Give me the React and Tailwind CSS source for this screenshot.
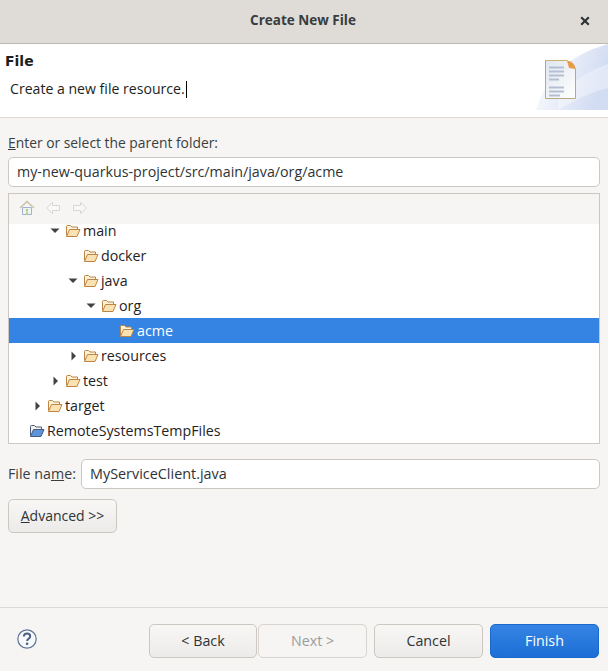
const FONT = "font-['Open_Sans','Noto_Sans',sans-serif]";

function Folder({ blue = false }) {
  const stroke = blue ? "#4a5a78" : "#bd8444";
  const back = blue ? "#f2f2ee" : "#fdf1d8";
  const front = blue ? "#5b93dc" : "#fae2b2";
  return (
    <svg width="16" height="14" viewBox="1 0 16 14" className="shrink-0">
      <path d="M1.5 11.5V2.5Q1.5 1.5 2.5 1.5H5.5L7 3H12.5V5.5" fill={back} stroke={stroke} strokeWidth="1" />
      <path d="M1.5 12.5L4.5 5.5H15L12 12.5Z" fill={front} stroke={stroke} strokeWidth="1" strokeLinejoin="round" />
    </svg>
  );
}

function Arrow({ open }) {
  return (
    <svg width="12" height="12" viewBox="0 0 12 12" className="ml-px shrink-0">
      {open ? <path d="M0.5 3.5H9.5L5 8Z" fill="#3f4345" /> : <path d="M3.5 1.5L8 6L3.5 10.5Z" fill="#3f4345" />}
    </svg>
  );
}

function Row({ indent, arrow, label, selected, blue }) {
  return (
    <div className={`flex h-[25px] items-center ${selected ? "bg-[#3584e4] text-white" : "text-[#1f2324]"}`}>
      <div style={{ width: indent }} className="shrink-0" />
      <div className="flex w-[17px] shrink-0 justify-start">{arrow ? <Arrow open={arrow === "open"} /> : null}</div>
      <Folder blue={blue} />
      <span className="ml-[1px] pt-[2px] text-[14.25px] leading-none">{label}</span>
    </div>
  );
}

function Btn({ children, className = "" }) {
  return (
    <div className={`flex h-[34px] w-[109px] items-center justify-center rounded-[5px] border border-[#cdc7c2] bg-gradient-to-b from-[#f8f7f6] to-[#ecebe9] text-[14.25px] text-[#2e3436] ${className}`}>
      {children}
    </div>
  );
}

export default function App() {
  return (
    <div className={`flex h-[671px] w-[608px] flex-col overflow-hidden bg-[#f6f5f4] ${FONT} text-[#2e3436]`}>
      <div className="relative flex h-[44px] shrink-0 items-center justify-center border-b border-[#bfb8b1] bg-[#dfdcd8] pb-[2px] pr-[2px]">
        <span className="text-[13.5px] font-bold text-[#383c3e]">Create New File</span>
        <svg width="10" height="10" viewBox="0 0 10 10" className="absolute left-[580px] top-[16px]">
          <path d="M1.2 1.2L8.8 8.8M8.8 1.2L1.2 8.8" stroke="#2e3436" strokeWidth="2.2" />
        </svg>
      </div>

      <div className="relative h-[74px] shrink-0 overflow-hidden border-b border-[#dcd9d5] bg-white">
        <div className="pl-[5px] pt-[9px] font-['DejaVu_Sans',sans-serif] text-[14px] font-bold leading-[16px] text-[#1c1f20]">File</div>
        <div className="flex items-center pl-[10px] pt-[10px] text-[14.1px] leading-[20px] text-[#1c1f20]">
          Create a new file resource.
          <span className="ml-[1px] inline-block h-[17px] w-px bg-black" />
        </div>
        <svg width="72" height="66" viewBox="0 0 72 66" className="absolute left-[536px] top-0">
          <defs>
            <linearGradient id="blob" x1="0" y1="0" x2="1" y2="0.3">
              <stop offset="0" stopColor="#ffffff" />
              <stop offset="1" stopColor="#d2dcf2" />
            </linearGradient>
          </defs>
          <path d="M0 66Q14 16 72 0V66Z" fill="url(#blob)" />
          <path d="M22 50Q48 28 72 20V44Q48 50 22 66Z" fill="#ffffff" opacity="0.35" />
        </svg>
        <svg width="33" height="41" viewBox="0 0 33 41" className="absolute left-[544px] top-[15px]">
          <defs>
            <linearGradient id="page" x1="0" y1="0" x2="1" y2="1">
              <stop offset="0" stopColor="#dfe6ee" />
              <stop offset="1" stopColor="#ffffff" />
            </linearGradient>
          </defs>
          <path d="M1.5 1.5H23L31.5 10V39.5H1.5Z" fill="url(#page)" stroke="#b3aa86" strokeWidth="1" />
          <path d="M1.5 1.5H23" stroke="#cdb16c" strokeWidth="1" />
          <path d="M23 1.5Q31 3 31.5 10L25 9Z" fill="#e89b4a" />
          <path d="M5 8.5H20M5 12.5H20M5 16.5H20M5 20.5H15M5 28.5H20M5 32.5H20M5 36.5H16" stroke="#b5bfd4" strokeWidth="2" />
        </svg>
      </div>

      <div className="flex flex-1 flex-col px-[8px]">
        <div className="mt-[15px] h-[20px] text-[13.85px] leading-[20px] text-[#3a3e40]">
          <span className="underline">E</span>nter or select the parent folder:
        </div>
        <div className="mt-[4px] flex h-[30px] items-center rounded-[5px] border border-[#cdc7c2] bg-white pl-[8px] text-[14.25px] text-[#2e3436]">
          my-new-quarkus-project/src/main/java/org/acme
        </div>

        <div className="mt-[6px] h-[251px] border border-[#cdc7c2] bg-white">
          <div className="flex h-[30px] items-center bg-[#f6f5f4] pb-[2px] pl-[10px]">
            <svg width="16" height="16" viewBox="0 0 16 16">
              <path d="M3.5 14.5V7.5H12.5V14.5Z" fill="#eef3fa" stroke="#9db4d2" />
              <path d="M1 8L8 1.5L15 8" fill="none" stroke="#c9c3a8" strokeWidth="1.6" />
              <rect x="7" y="9" width="2" height="2" fill="#b6cc6a" />
              <rect x="7" y="11.5" width="2" height="3" fill="#c4d67c" />
            </svg>
            <svg width="16" height="14" viewBox="0 0 16 14" className="ml-[10px]">
              <path d="M1.5 7L7.5 1.5V4.5H14.5V9.5H7.5V12.5Z" fill="#f8f8f7" stroke="#d6d6d3" />
            </svg>
            <svg width="16" height="14" viewBox="0 0 16 14" className="ml-[11px]">
              <path d="M14.5 7L8.5 1.5V4.5H1.5V9.5H8.5V12.5Z" fill="#f8f8f7" stroke="#d6d6d3" />
            </svg>
          </div>
          <div className="h-[219px] overflow-hidden">
            <div className="-mt-[6px]">
              <Row indent={40} arrow="open" label="main" />
              <Row indent={58} label="docker" />
              <Row indent={58} arrow="open" label="java" />
              <Row indent={76} arrow="open" label="org" />
              <Row indent={94} label="acme" selected />
              <Row indent={58} arrow="closed" label="resources" />
              <Row indent={40} arrow="closed" label="test" />
              <Row indent={22} arrow="closed" label="target" />
              <Row indent={4} label="RemoteSystemsTempFiles" blue />
            </div>
          </div>
        </div>

        <div className="mt-[15px] flex h-[30px] items-center">
          <span className="w-[73px] shrink-0 text-[14.25px] text-[#3a3e40]">
            File na<span className="underline">m</span>e:
          </span>
          <div className="flex h-[30px] flex-1 items-center rounded-[5px] border border-[#cdc7c2] bg-white pl-[8px] text-[14.4px] text-[#2e3436]">
            MyServiceClient.java
          </div>
        </div>

        <Btn className="mt-[10px]">
          <span className="pb-[2px] text-[14px]"><span className="underline">A</span>dvanced &gt;&gt;</span>
        </Btn>
      </div>

      <div className="flex h-[64px] shrink-0 border-t border-[#dcd9d5] pl-[17px] pr-[9px] pt-[16px]">
        <svg width="20" height="20" viewBox="0 0 20 20" className="mt-[5px]">
          <circle cx="10" cy="10" r="9.2" fill="#f8f9fb" stroke="#5d7397" strokeWidth="1.2" />
          <path d="M6.8 7.5Q7 4.6 10 4.6Q13.2 4.6 13.2 7.2Q13.2 8.8 11.4 9.8Q10.2 10.5 10.2 12" fill="none" stroke="#4a5f85" strokeWidth="2" />
          <circle cx="10.1" cy="14.7" r="1.3" fill="#4a5f85" />
        </svg>
        <div className="ml-auto flex">
          <Btn className="!w-[108px]">&lt; Back</Btn>
          <Btn className="ml-px !from-[#f6f5f4] !to-[#f6f5f4] !text-[#9a9c9b] border-[#d8d4d0]">Next &gt;</Btn>
          <Btn className="ml-[7px]">Cancel</Btn>
          <Btn className="ml-[7px] !border-[#1b6acb] !from-[#3584e4] !to-[#1c6fd6] !text-white">Finish</Btn>
        </div>
      </div>
    </div>
  );
}
